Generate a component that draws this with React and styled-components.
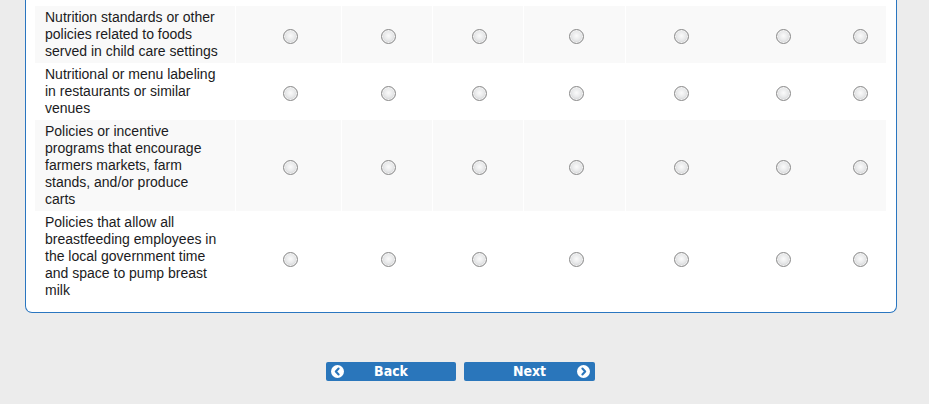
import React from 'react';
import styled, { createGlobalStyle } from 'styled-components';

const GlobalStyle = createGlobalStyle`
  html, body {
    margin: 0;
    padding: 0;
    background: #ececec;
  }
  body {
    font-family: "Liberation Sans", Arial, sans-serif;
  }
`;

const Page = styled.div`
  width: 929px;
  min-height: 404px;
`;

const Panel = styled.div`
  margin-left: 25px;
  background: #fff;
  border: 1px solid #2a76c0;
  border-top: none;
  border-radius: 0 0 7px 7px;
  padding: 6px 9px 8px;
  width: 852px;
`;

const Matrix = styled.div`
  display: grid;
  grid-template-columns: 200px 106px 91px 91px 102px 108px 98px 55px;
`;

const Row = styled.div`
  display: contents;
`;

const Label = styled.div`
  background: ${p => (p.$odd ? '#f9f9f9' : '#fff')};
  color: #1b1b22;
  font-size: 14px;
  line-height: 17px;
  padding: 3px 16px ${p => (p.$last ? 5 : 3)}px 10px;
`;

const Cell = styled.div`
  background: ${p => (p.$odd ? '#f9f9f9' : '#fff')};
  border-left: ${p => (p.$sep ? '1px solid #fff' : 'none')};
  display: flex;
  align-items: center;
  justify-content: center;
`;

const Radio = styled.input.attrs({ type: 'radio' })`
  appearance: none;
  -webkit-appearance: none;
  margin: 4px 0 0 3px;
  width: 15px;
  height: 15px;
  border-radius: 50%;
  border: 1px solid #8a8a8a;
  box-sizing: border-box;
  background: radial-gradient(circle at 50% 45%, #fbfbfb 0, #e8e9ea 45%, #cfd0d2 75%, #b8b8b8 100%);
  box-shadow: inset 0 0 0 1px #f4f4f4;
  cursor: pointer;
`;

const Nav = styled.div`
  display: flex;
  justify-content: center;
  gap: 8px;
  padding-right: 8px;
  margin-top: 49px;
`;

const NavButton = styled.button`
  display: grid;
  grid-template-columns: 13px 1fr 13px;
  align-items: center;
  width: ${p => p.$w}px;
  height: 19px;
  padding: 0 5px;
  border: none;
  border-radius: 2px;
  background: #2a76bb;
  color: #fff;
  font-family: "DejaVu Sans Condensed", "DejaVu Sans", sans-serif;
  font-weight: bold;
  font-size: 14px;
  line-height: 19px;
  cursor: pointer;
`;

const ButtonText = styled.span`
  grid-column: 2;
  text-align: center;
`;

const IconSlot = styled.span`
  grid-column: ${p => (p.$side === 'left' ? 1 : 3)};
  grid-row: 1;
  display: flex;
`;

const Arrow = ({ dir }) => (
  <IconSlot $side={dir}>
    <svg width="13" height="13" viewBox="0 0 13 13">
      <circle cx="6.5" cy="6.5" r="6.5" fill="#fff" />
      <path
        d={dir === 'left' ? 'M7.6 3.6 L4.8 6.5 L7.6 9.4' : 'M5.4 3.6 L8.2 6.5 L5.4 9.4'}
        stroke="#2a76bb"
        strokeWidth="2.1"
        fill="none"
        strokeLinecap="round"
        strokeLinejoin="round"
      />
    </svg>
  </IconSlot>
);

const items = [
  'Nutrition standards or other policies related to foods served in child care settings',
  'Nutritional or menu labeling in restaurants or similar venues',
  'Policies or incentive programs that encourage farmers markets, farm stands, and/or produce carts',
  'Policies that allow all breastfeeding employees in the local government time and space to pump breast milk',
];

const separators = [true, true, true, true, true, false, false];

export default function App() {
  return (
    <Page>
      <GlobalStyle />
      <Panel>
        <Matrix>
          {items.map((text, i) => (
            <Row key={i}>
              <Label $odd={i % 2 === 0} $last={i === items.length - 1}>{text}</Label>
              {separators.map((sep, j) => (
                <Cell key={j} $odd={i % 2 === 0} $sep={sep}>
                  <Radio name={`q${i}`} />
                </Cell>
              ))}
            </Row>
          ))}
        </Matrix>
      </Panel>
      <Nav>
        <NavButton $w={130}>
          <Arrow dir="left" />
          <ButtonText>Back</ButtonText>
        </NavButton>
        <NavButton $w={131}>
          <ButtonText>Next</ButtonText>
          <Arrow dir="right" />
        </NavButton>
      </Nav>
    </Page>
  );
}
